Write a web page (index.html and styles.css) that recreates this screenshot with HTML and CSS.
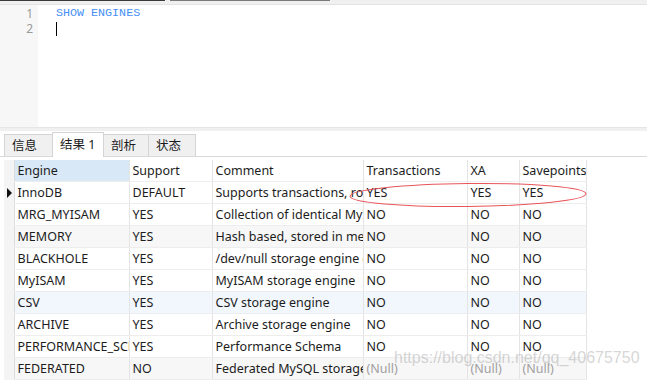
FILE: index.html
```html
<!DOCTYPE html>
<html lang="zh-CN">
<head>
  <meta charset="UTF-8" />
  <title>SHOW ENGINES</title>
  <link rel="stylesheet" href="styles.css">
</head>
<body>
  <div class="doc-tabs">
    <div class="doc-tab dark"></div>
    <div class="doc-tab"></div>
  </div>
  <section class="editor">
    <div class="gutter">
      <span>1</span>
      <span>2</span>
    </div>
    <div class="code">
      <div class="line kw">SHOW ENGINES</div>
      <div class="line"><span class="caret"></span></div>
    </div>
  </section>
  <div class="split"></div>
  <nav class="result-tabs">
    <div class="rtab">信息</div>
    <div class="rtab active">结果 1</div>
    <div class="rtab">剖析</div>
    <div class="rtab">状态</div>
  </nav>
  <section class="grid-wrap">
    <table class="grid">
      <colgroup>
        <col class="c-ind"><col class="c-engine"><col class="c-support"><col class="c-comment">
        <col class="c-trans"><col class="c-xa"><col class="c-save">
      </colgroup>
      <thead>
        <tr>
          <th class="ind"></th>
          <th class="sel">Engine</th>
          <th>Support</th>
          <th>Comment</th>
          <th>Transactions</th>
          <th>XA</th>
          <th>Savepoints</th>
        </tr>
      </thead>
      <tbody>
        <tr>
          <td class="ind"><span class="arrow"></span></td>
          <td>InnoDB</td><td>DEFAULT</td><td>Supports transactions, row-level locking, and foreign keys</td><td>YES</td><td>YES</td><td>YES</td>
        </tr>
        <tr>
          <td class="ind"></td>
          <td>MRG_MYISAM</td><td>YES</td><td>Collection of identical MyISAM tables</td><td>NO</td><td>NO</td><td>NO</td>
        </tr>
        <tr class="gray">
          <td class="ind"></td>
          <td>MEMORY</td><td>YES</td><td>Hash based, stored in memory, useful for temporary tables</td><td>NO</td><td>NO</td><td>NO</td>
        </tr>
        <tr>
          <td class="ind"></td>
          <td>BLACKHOLE</td><td>YES</td><td>/dev/null storage engine (anything you write to it disappears)</td><td>NO</td><td>NO</td><td>NO</td>
        </tr>
        <tr>
          <td class="ind"></td>
          <td>MyISAM</td><td>YES</td><td>MyISAM storage engine</td><td>NO</td><td>NO</td><td>NO</td>
        </tr>
        <tr class="blue">
          <td class="ind"></td>
          <td>CSV</td><td>YES</td><td>CSV storage engine</td><td>NO</td><td>NO</td><td>NO</td>
        </tr>
        <tr>
          <td class="ind"></td>
          <td>ARCHIVE</td><td>YES</td><td>Archive storage engine</td><td>NO</td><td>NO</td><td>NO</td>
        </tr>
        <tr>
          <td class="ind"></td>
          <td>PERFORMANCE_SCHEMA</td><td>YES</td><td>Performance Schema</td><td>NO</td><td>NO</td><td>NO</td>
        </tr>
        <tr class="gray">
          <td class="ind"></td>
          <td>FEDERATED</td><td>NO</td><td>Federated MySQL storage engine</td><td class="null">(Null)</td><td class="null">(Null)</td><td class="null">(Null)</td>
        </tr>
      </tbody>
    </table>
    <svg class="mark" width="242" height="30" viewBox="0 0 242 30">
      <ellipse cx="120" cy="14" rx="118" ry="11.5" fill="none" stroke="#e8555a" stroke-width="1" transform="rotate(-0.6 120 14)"/>
    </svg>
    <div class="watermark">https://blog.csdn.net/qq_40675750</div>
  </section>
</body>
</html>
```

FILE: styles.css
```css
body {
  margin: 0;
  background: #fff;
  font-family: "Noto Sans", "Noto Sans CJK SC", sans-serif;
  color: #1a1a1a;
  width: 647px;
  height: 380px;
  overflow: hidden;
}
.doc-tabs {
  display: flex;
  gap: 5px;
  height: 4px;
  background: #f0f0f0;
  border-bottom: 1px solid #e3e3e3;
}
.doc-tab {
  width: 160px;
  height: 1px;
  background: #7a7a7a;
}
.doc-tab.dark {
  width: 165px;
  background: #3a3a3a;
}
.editor {
  display: flex;
  height: 122px;
}
.gutter {
  width: 38px;
  background: #f7f7f7;
  display: flex;
  flex-direction: column;
  align-items: flex-end;
  padding: 1px 5px 0 0;
  box-sizing: border-box;
  font-size: 12px;
  line-height: 15px;
  color: #9a9a9a;
}
.code {
  padding: 1px 0 0 18px;
  font-family: "Liberation Mono", monospace;
  font-size: 11.7px;
  line-height: 15px;
}
.line {
  height: 15px;
}
.kw {
  color: #4590f7;
}
.caret {
  display: inline-block;
  width: 1px;
  height: 14px;
  margin-top: 1px;
  background: #000;
}
.split {
  height: 3px;
  background: #f0f0f0;
  border-top: 1px solid #e6e6e6;
}
.result-tabs {
  display: flex;
  align-items: flex-end;
  height: 25px;
  padding-left: 4px;
  border-bottom: 1px solid #d9d9d9;
}
.rtab {
  height: 21px;
  line-height: 21px;
  padding: 0 7px;
  background: #f0f0f0;
  border: 1px solid #d4d4d4;
  border-bottom: none;
  font-size: 12.5px;
  margin-left: -1px;
}
.rtab:first-child {
  margin-left: 0;
  width: 33px;
}
.rtab.active {
  height: 24px;
  line-height: 24px;
  background: #fff;
  position: relative;
  top: 1px;
  width: 36px;
}
.rtab:nth-child(3) { width: 30px; }
.rtab:nth-child(4) { width: 32px; }
.grid-wrap {
  position: relative;
  padding: 3px 0 0 4px;
}
.grid {
  border-collapse: collapse;
  table-layout: fixed;
  width: 582px;
  font-size: 12.5px;
}
.c-ind { width: 10px; }
.c-engine { width: 115px; }
.c-support { width: 83px; }
.c-comment { width: 151px; }
.c-trans { width: 104px; }
.c-xa { width: 52px; }
.c-save { width: 67px; }
.grid th, .grid td {
  height: 21px;
  padding: 0 0 0 3px;
  text-align: left;
  font-weight: normal;
  white-space: nowrap;
  overflow: hidden;
  border-right: 1px solid #e4e4e4;
  border-bottom: 1px solid #ededed;
  color: #1c1c1c;
}
.grid th.sel {
  background: #d9e8f7;
}
.grid .ind {
  padding: 0;
  background: #f4f4f4;
  border-right: 1px solid #dcdcdc;
  border-bottom: 1px solid #f4f4f4;
}
.arrow {
  display: block;
  width: 0;
  height: 0;
  margin-left: 3px;
  border-top: 5px solid transparent;
  border-bottom: 5px solid transparent;
  border-left: 5px solid #111;
}
.grid tr.gray td { background: #f7f7f7; }
.grid tr.blue td { background: #f2f7fd; }
.grid tr td.ind { background: #f4f4f4; }
.grid td.null { color: #a0a0a0; }
.mark {
  position: absolute;
  left: 348px;
  top: 24px;
}
.watermark {
  position: absolute;
  left: 394px;
  top: 192px;
  font-family: "Liberation Sans", sans-serif;
  font-size: 16px;
  color: rgba(150, 150, 150, 0.4);
  pointer-events: none;
}
```
